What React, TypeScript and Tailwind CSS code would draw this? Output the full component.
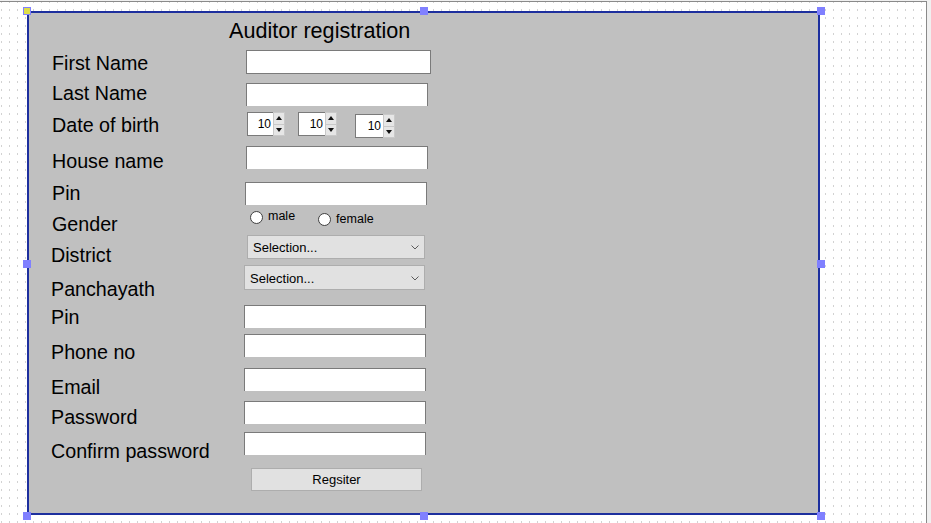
import React from 'react';

const labels = [
  { text: 'First Name', cls: 'mt-[12px] ml-px' },
  { text: 'Last Name', cls: 'mt-[10px] ml-px' },
  { text: 'Date of birth', cls: 'mt-[12px] ml-px' },
  { text: 'House name', cls: 'mt-[16px] ml-px' },
  { text: 'Pin', cls: 'mt-[12px] ml-px' },
  { text: 'Gender', cls: 'mt-[11px] ml-px' },
  { text: 'District', cls: 'mt-[11px]' },
  { text: 'Panchayath', cls: 'mt-[14px]' },
  { text: 'Pin', cls: 'mt-[8px]' },
  { text: 'Phone no', cls: 'mt-[15px]' },
  { text: 'Email', cls: 'mt-[15px]' },
  { text: 'Password', cls: 'mt-[10px]' },
  { text: 'Confirm password', cls: 'mt-[14px]' },
];

const TextBox = ({ className }: { className: string }) => (
  <input
    type="text"
    className={`block w-[182px] h-[23px] bg-white border border-b-0 border-[#7a7a7a] outline-none ${className}`}
  />
);

const Spinner = ({ className }: { className: string }) => (
  <div className={`flex h-[24px] bg-white border border-r-0 border-[#7a7a7a] ${className}`}>
    <div className="flex-1 text-right pr-[2px] text-[12px] leading-[22px] text-black">10</div>
    <div className="flex flex-col w-[12px] -my-px h-[24px] border border-[#c9c9c9]">
      <div className="flex flex-1 items-center justify-center bg-[#e6e6e6] border-b border-[#c9c9c9]">
        <svg width="6" height="4" viewBox="0 0 6 4">
          <path d="M3 0 L6 4 L0 4 Z" fill="#111" />
        </svg>
      </div>
      <div className="flex flex-1 items-center justify-center bg-[#e6e6e6]">
        <svg width="6" height="4" viewBox="0 0 6 4">
          <path d="M0 0 L6 0 L3 4 Z" fill="#111" />
        </svg>
      </div>
    </div>
  </div>
);

const Radio = ({ label, className, textCls }: { label: string; className: string; textCls: string }) => (
  <div className={`flex items-start ${className}`}>
    <div className="w-[13px] h-[13px] rounded-full bg-white border border-[#3f3f3f]" />
    <span className={`ml-[5px] text-[12.5px] leading-[13px] text-black ${textCls}`}>{label}</span>
  </div>
);

const Select = ({ className }: { className: string }) => (
  <div className={`flex items-center justify-between bg-[#e1e1e1] border border-[#adadad] pl-[5px] pr-[5px] ${className}`}>
    <span className="pt-[2px] text-[13px] leading-[14px] text-black">Selection...</span>
    <svg width="8" height="5" viewBox="0 0 8 5" className="mt-px">
      <path d="M0.5 0.5 L4 4 L7.5 0.5" fill="none" stroke="#5a5a5a" strokeWidth="1" />
    </svg>
  </div>
);

const Handle = ({ className }: { className: string }) => (
  <div className={`absolute w-[8px] h-[8px] bg-[#8080ff] ${className}`} />
);

export default function App() {
  return (
    <div className="w-[931px] h-[523px] bg-[#f0f0f0] pt-px overflow-hidden font-['Liberation_Sans',Arial,sans-serif] text-black">
      <div className="w-[927px] h-[522px] border-t border-r border-[#8a8a8a] bg-white bg-[radial-gradient(circle_at_0.5px_1px,#d2d2d2_0.8px,transparent_1px)] bg-[size:8px_8px] bg-[position:1px_7px] pt-[9px] pl-[27px]">
        <div className="relative w-[793px] h-[504px] border-2 border-[#1d2f9e] bg-[#c0c0c0]">
          <div className="pt-[7px] pl-[200px] h-[28px] text-[21.6px] leading-[22px] whitespace-nowrap">
            Auditor registration
          </div>

          <div className="flex pl-[22px]">
            {/* labels */}
            <div className="w-[193px] flex flex-col">
              {labels.map((l, i) => (
                <div key={i} className={`h-[20px] text-[19.7px] leading-[20px] whitespace-nowrap ${l.cls}`}>
                  {l.text}
                </div>
              ))}
            </div>

            {/* controls */}
            <div className="flex flex-col">
              <input
                type="text"
                className="block mt-[9px] ml-[2px] w-[185px] h-[24px] bg-white border border-[#7a7a7a] outline-none"
              />
              <TextBox className="mt-[9px] ml-[2px]" />
              <div className="flex items-start mt-[6px]">
                <Spinner className="ml-[3px] w-[38px]" />
                <Spinner className="ml-[13px] w-[39px]" />
                <Spinner className="ml-[18px] mt-[2px] w-[40px]" />
              </div>
              <TextBox className="mt-[8px] ml-[2px]" />
              <TextBox className="mt-[13px] ml-px" />
              <div className="flex items-start mt-[5px] h-[18px] pl-[6px]">
                <Radio label="male" className="mt-px" textCls="-mt-px" />
                <Radio label="female" className="ml-[23px] mt-[3px]" textCls="mt-0" />
              </div>
              <Select className="mt-[7px] ml-[3px] w-[178px] h-[24px]" />
              <Select className="mt-[6px] w-[181px] h-[25px]" />
              <TextBox className="mt-[15px]" />
              <TextBox className="mt-[6px]" />
              <TextBox className="mt-[11px]" />
              <TextBox className="mt-[10px]" />
              <TextBox className="mt-[8px]" />
              <button className="mt-[13px] ml-[7px] w-[171px] h-[23px] bg-[#e1e1e1] border border-[#adadad] text-[13px] leading-[21px] text-black">
                Regsiter
              </button>
            </div>
          </div>

          {/* selection handles */}
          <div className="absolute -left-[6px] -top-[6px] w-[8px] h-[8px] bg-[#dede4a] border border-[#8080ff]" />
          <Handle className="left-[391px] -top-[6px]" />
          <Handle className="left-[788px] -top-[6px]" />
          <Handle className="-left-[6px] top-[247px]" />
          <Handle className="left-[788px] top-[247px]" />
          <Handle className="-left-[6px] top-[499px]" />
          <Handle className="left-[391px] top-[499px]" />
          <Handle className="left-[788px] top-[499px]" />
        </div>
      </div>
    </div>
  );
}
